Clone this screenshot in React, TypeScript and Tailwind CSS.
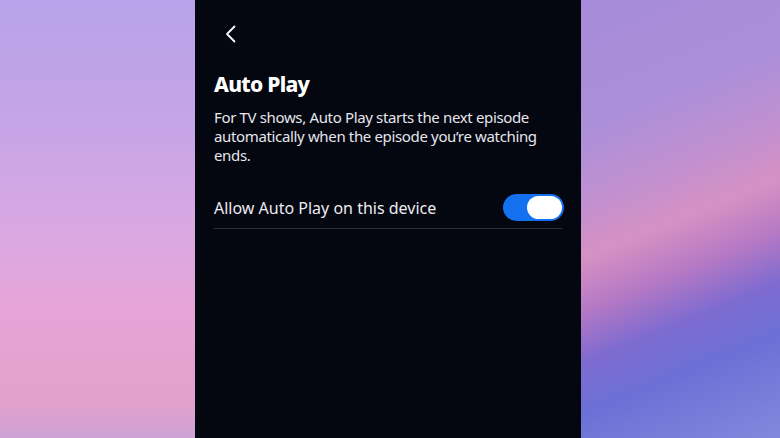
export default function App() {
  return (
    <div className="flex h-[438px] w-[780px] overflow-hidden font-['Noto_Sans',sans-serif]">
      {/* wallpaper, left */}
      <div className="w-[195px] shrink-0 bg-[linear-gradient(180deg,#b7a3ea_0%,#c6a4e6_28%,#d9a8e2_52%,#e6a3d6_72%,#e2a0cc_92%,#cda2d6_100%)]" />

      {/* settings panel */}
      <div className="flex w-[386px] shrink-0 flex-col bg-[#040610] px-[19px] text-white">
        <button className="mt-[25px] ml-[8px] flex h-[18px] w-[16px] items-center justify-center">
          <svg width="11" height="18" viewBox="0 0 11 18" fill="none">
            <path d="M9.5 1.5 2 9l7.5 7.5" stroke="white" strokeWidth="1.8" strokeLinecap="round" strokeLinejoin="round" />
          </svg>
        </button>

        <h1 className="mt-[27px] text-[21px] font-extrabold leading-[28px] tracking-[-0.7px]">Auto Play</h1>
        <p className="mt-[10px] text-[15px] leading-[19px] tracking-[-0.35px] text-[#e6e6ec]">
          For TV shows, Auto Play starts the next episode automatically when the episode you’re watching ends.
        </p>

        <div className="mt-[29px] flex items-center justify-between border-b border-[#2c2d38] pb-[7px]">
          <span className="text-[16px] leading-[22px] text-[#ececf0]">Allow Auto Play on this device</span>
          <div className="mr-[-2px] flex h-[27px] w-[61px] items-center justify-end rounded-full bg-[#1370ee] px-[2px]">
            <div className="h-[23px] w-[35px] rounded-full bg-white" />
          </div>
        </div>
      </div>

      {/* wallpaper, right */}
      <div className="flex-1 bg-[linear-gradient(158deg,#a58bd9_0%,#ad8fd9_26%,#c290cf_40%,#d691c3_50%,#b679c4_60%,#7e6bd0_70%,#6c70d6_80%,#8388dc_100%)]" />
    </div>
  );
}
